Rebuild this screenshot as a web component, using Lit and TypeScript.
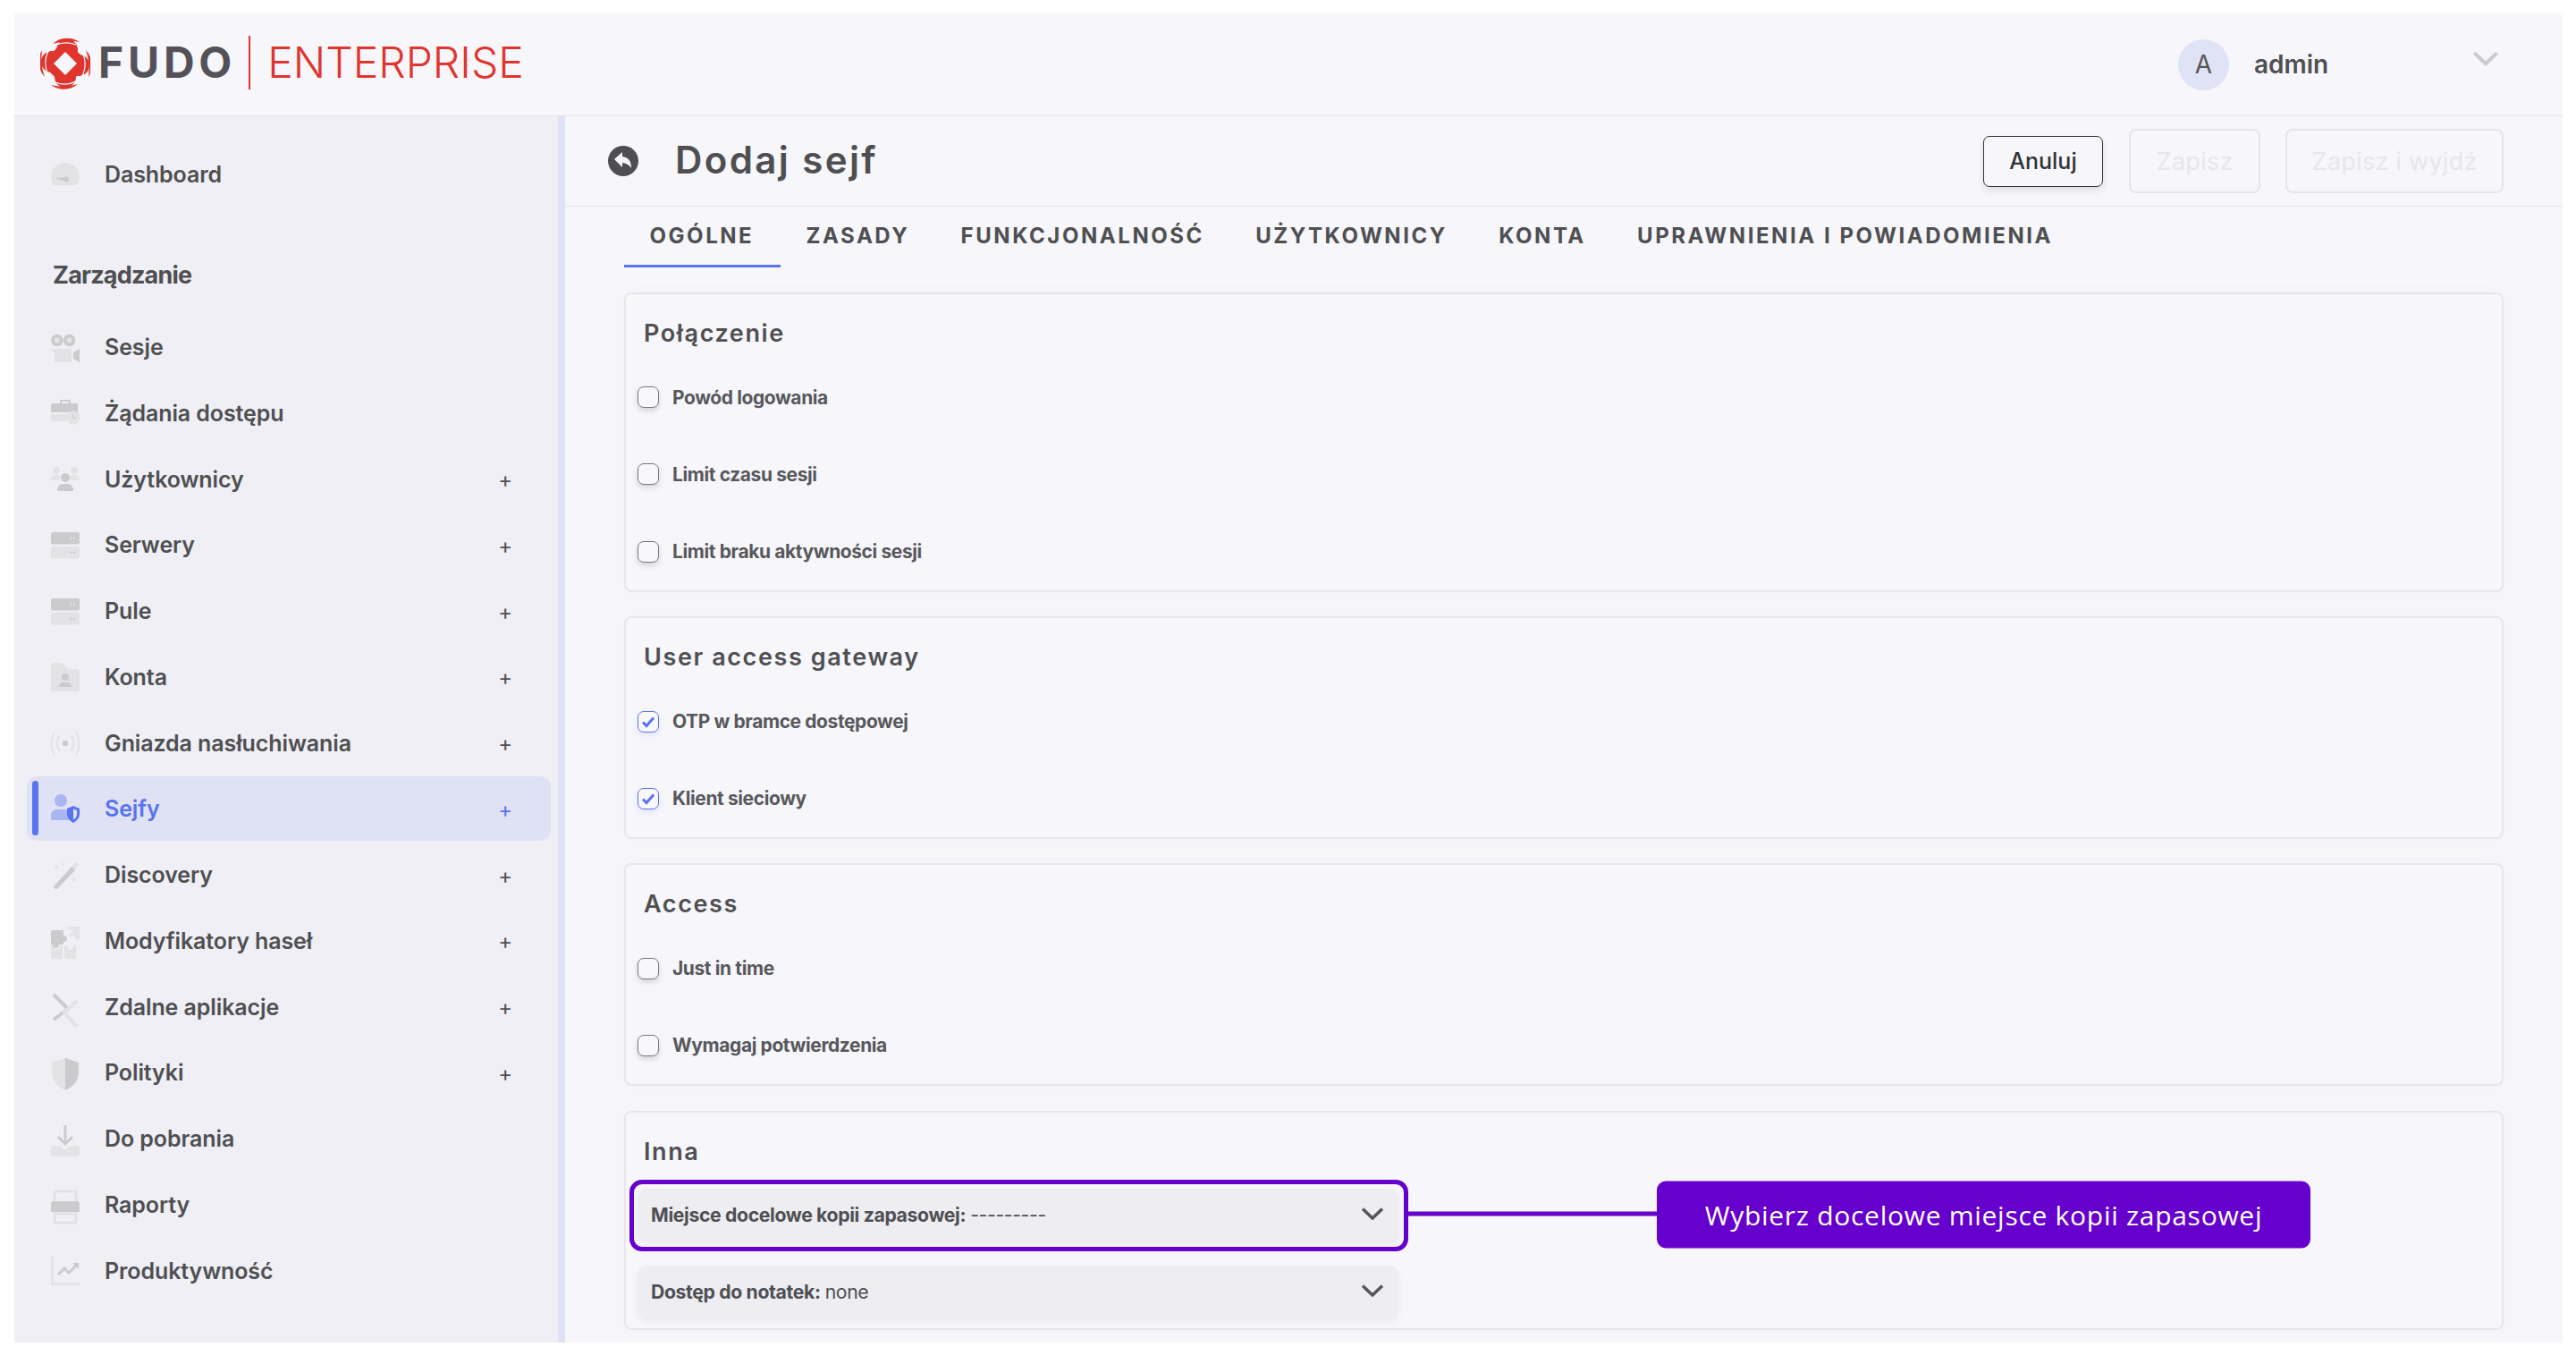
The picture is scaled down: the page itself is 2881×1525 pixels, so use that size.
import { LitElement, html, css, svg } from "lit";
import { customElement } from "lit/decorators.js";

const D = "#cbcbcf";
const L = "#e2e2e7";
const icons: Record<string, unknown> = {
  dash: svg`<path d="M2.8 28A16 16 0 1 1 29.2 28Z" fill="${L}"/><path d="M4 20L15 19.5V23Z" fill="${D}"/><circle cx="17" cy="21.5" r="3" fill="${D}"/>`,
  cam: svg`<circle cx="6.8" cy="8.5" r="6.8" fill="${D}"/><circle cx="20.5" cy="8.5" r="6.8" fill="${D}"/><circle cx="6.8" cy="8.5" r="3" fill="${L}"/><circle cx="20.5" cy="8.5" r="3" fill="${L}"/><path d="M0 18H23V33H4V21H1Z" fill="${L}"/><path d="M32 18V33L25 29V22Z" fill="${D}"/>`,
  case: svg`<path d="M11 5V2H21V5" fill="none" stroke="${D}" stroke-width="2"/><path d="M2 5H30V15H0V7Q0 5 2 5Z" fill="${D}"/><path d="M0 17H18V25H2Q0 25 0 23Z" fill="${L}"/><circle cx="25" cy="21" r="7.5" fill="${L}"/><path d="M25 17V21.5H28" fill="none" stroke="${D}" stroke-width="1.3"/>`,
  users: svg`<circle cx="6" cy="6" r="4" fill="${L}"/><circle cx="26" cy="6" r="4" fill="${L}"/><path d="M0 17Q0 11 6 11H10V17Z M32 17Q32 11 26 11H22V17Z" fill="${L}"/><circle cx="16" cy="14" r="5" fill="${D}"/><path d="M7 29Q7 21 14 21H18Q25 21 25 29Z" fill="${D}"/>`,
  server: svg`<rect y="2" width="32" height="13.5" rx="2" fill="${D}"/><rect y="18" width="32" height="13.5" rx="2" fill="${L}"/><circle cx="22" cy="8.7" r="1.2" fill="${L}"/><circle cx="26" cy="8.7" r="1.2" fill="${L}"/><circle cx="22" cy="24.7" r="1.2" fill="${D}"/><circle cx="26" cy="24.7" r="1.2" fill="${D}"/>`,
  folder: svg`<path d="M2 0H12L19 7H30Q32 7 32 9V30Q32 32 30 32H2Q0 32 0 30V2Q0 0 2 0Z" fill="${L}"/><circle cx="16" cy="16" r="4" fill="${D}"/><path d="M9 27Q9 22 14 22H18Q23 22 23 27Z" fill="${D}"/>`,
  wave: svg`<circle cx="16" cy="16" r="3.2" fill="${D}"/><g fill="none" stroke="${L}" stroke-width="2"><path d="M9.5 7Q4 16 9.5 25"/><path d="M22.5 7Q28 16 22.5 25"/><path d="M4 3Q-3 16 4 29"/><path d="M28 3Q35 16 28 29"/></g>`,
  sejf: svg`<circle cx="11" cy="7" r="7" fill="#a9b6ef"/><path d="M0 29V24Q0 17 7 17H15Q18 17 20 18V29Z" fill="#a9b6ef"/><path d="M25 13L32 16V22Q32 28 25 32Q18 28 18 22V16Z" fill="#5a73ee"/><path d="M25 16.5L29 18V22Q29 26 25 28.5Z" fill="#dfe2f5"/>`,
  wand: svg`<path d="M3 29L23 7L27 11L7 32Q3 32 3 29Z" fill="${D}"/><path d="M23 7L26 3.5Q28 1 30 3T29 7L27 11Z" fill="${L}"/><path d="M6 3L7 6L10 7L7 8L6 11L5 8L2 7L5 6ZM14 1L14.7 3.3L17 4L14.7 4.7L14 7L13.3 4.7L11 4L13.3 3.3ZM26 18L27 21L30 22L27 23L26 26L25 23L22 22L25 21Z" fill="${L}"/>`,
  puzzle: svg`<path d="M0 6Q0 4 2 4H14V10Q18 10 18 14Q18 17 14 17V20H9Q9 24 5 24Q2 24 2 20H0Z" fill="${D}"/><path d="M0 21H2Q3 26 7 25Q10 24 10 21H13V36H2Q0 36 0 34Z" fill="${L}"/><path d="M15 21H18Q18 26 21 26Q25 26 25 21H28V34Q28 36 26 36H15Z" fill="${L}"/><path d="M18 0H30Q32 0 32 2V14H28Q28 10 24 10Q20 10 20 14V9Q24 8 24 5Q24 3 18 3Z" fill="${L}"/>`,
  apps: svg`<path d="M3 2L19 18L3 30" fill="none" stroke="${D}" stroke-width="4"/><path d="M29 9L15 22L29 38" fill="none" stroke="${L}" stroke-width="4"/>`,
  shield: svg`<path d="M16 0L1 5V16Q1 29 16 36Z" fill="${L}"/><path d="M16 0L31 5V16Q31 29 16 36Z" fill="${D}"/>`,
  down: svg`<path d="M16 1V22M8 14L16 22L24 14" fill="none" stroke="${D}" stroke-width="3"/><path d="M2 24H10L16 29L22 24H30Q32 24 32 26V32Q32 36 28 36H4Q0 36 0 32V26Q0 24 2 24Z" fill="${L}"/>`,
  print: svg`<path d="M4 13V1H28V13" fill="none" stroke="${L}" stroke-width="3"/><path d="M3 12H29Q32 12 32 15V24H0V15Q0 12 3 12Z" fill="${D}"/><path d="M4 26H28V36H4Z" fill="none" stroke="${L}" stroke-width="3"/>`,
  chart: svg`<path d="M1.5 0V30.5H32" fill="none" stroke="${L}" stroke-width="3"/><path d="M8 20L15 13L20 18L29 9" fill="none" stroke="${D}" stroke-width="3"/><path d="M24 7H31V14Z" fill="${D}"/>`,
};

const ic = (n: string) => html`<svg class="ic" viewBox="0 0 32 32">${icons[n]}</svg>`;
const chev = (cls: string) =>
  html`<svg class="${cls}" viewBox="0 0 26 14"><path d="M2 1.5L13 12L24 1.5" fill="none" stroke="currentColor" stroke-width="3.5"/></svg>`;

const menu: [string, string, boolean, boolean?][] = [
  ["Sesje", "cam", false],
  ["Żądania dostępu", "case", false],
  ["Użytkownicy", "users", true],
  ["Serwery", "server", true],
  ["Pule", "server", true],
  ["Konta", "folder", true],
  ["Gniazda nasłuchiwania", "wave", true],
  ["Sejfy", "sejf", true, true],
  ["Discovery", "wand", true],
  ["Modyfikatory haseł", "puzzle", true],
  ["Zdalne aplikacje", "apps", true],
  ["Polityki", "shield", true],
  ["Do pobrania", "down", false],
  ["Raporty", "print", false],
  ["Produktywność", "chart", false],
];

const tabs = ["OGÓLNE", "ZASADY", "FUNKCJONALNOŚĆ", "UŻYTKOWNICY", "KONTA", "UPRAWNIENIA I POWIADOMIENIA"];

const sections: [string, [string, boolean][]][] = [
  ["Połączenie", [["Powód logowania", false], ["Limit czasu sesji", false], ["Limit braku aktywności sesji", false]]],
  ["User access gateway", [["OTP w bramce dostępowej", true], ["Klient sieciowy", true]]],
  ["Access", [["Just in time", false], ["Wymagaj potwierdzenia", false]]],
];

@customElement("app-root")
export class AppRoot extends LitElement {
  static styles = css`
    :host { display: block; height: 1525px; background: #fff; padding: 15px 15px 24px 16px; box-sizing: border-box; font-family: Inter, "Liberation Sans", sans-serif; color: #4f4f52; overflow: hidden; }
    .frame { height: 1486px; background: #f6f6fb; display: flex; flex-direction: column; overflow: hidden; }
    header { height: 114px; flex: none; border-bottom: 1px solid #e3e3e9; display: flex; align-items: center; padding-left: 29px; padding-right: 71px; }
    .mark { width: 56px; height: 58px; flex: none; margin-top: -2px; }
    .fudo { font-size: 48px; font-weight: 700; letter-spacing: 4.8px; color: #545158; margin-left: 9px; line-height: 1; margin-top: -4px; }
    .sep { width: 2px; height: 60px; background: #e0352e; margin: -4px 19px 0 14px; flex: none; }
    .ent { font-size: 48px; font-weight: 300; color: #e0352e; line-height: 1; letter-spacing: 0; margin-top: -4px; }
    .user { margin-left: auto; display: flex; align-items: center; }
    .avatar { width: 57px; height: 57px; border-radius: 50%; background: #e0e3f5; display: flex; align-items: center; justify-content: center; font-size: 28px; color: #555; }
    .uname { font-size: 28px; font-weight: 600; margin-left: 28px; width: 244px; }
    .uchev { width: 30px; height: 17px; color: #cbcbcf; margin-top: -14px; }
    .body { flex: 1; display: flex; min-height: 0; }
    aside { width: 608px; flex: none; background: #efeff5; border-right: 8px solid #dfe2f5; padding-top: 29px; }
    .item { height: 72px; margin: 0 8px 1.75px 14px; padding: 0 43px 0 27px; display: flex; align-items: center; font-size: 25px; font-weight: 600; letter-spacing: -0.1px; border-radius: 12px; position: relative; }
    .item .ic { width: 32px; height: 32px; overflow: visible; flex: none; margin-right: 28px; }
    .item .plus { margin-left: auto; font-size: 24px; font-weight: 400; margin-top: 2px; }
    .item.on { background: #dfe2f5; color: #5a73ee; }
    .bar { position: absolute; left: 6px; top: 5px; bottom: 6px; width: 7px; border-radius: 4px; background: #5a73ee; }
    .sec { font-size: 27px; font-weight: 700; letter-spacing: -0.8px; height: 40px; line-height: 40px; margin: 57px 0 24px 43px; }
    .dashitem { margin-bottom: 0; }
    main { flex: 1; min-width: 0; display: flex; flex-direction: column; }
    .tbar { height: 101px; flex: none; border-bottom: 1px solid #e3e3e9; display: flex; align-items: center; padding: 0 66px 0 48px; box-sizing: border-box; }
    .back { width: 34px; height: 34px; flex: none; }
    h1 { margin: -3px 0 0 41px; font-size: 42px; font-weight: 600; letter-spacing: 2.4px; flex: 1; line-height: 1; }
    .btn { box-sizing: border-box; display: flex; align-items: center; justify-content: center; border-radius: 8px; font-size: 27.6px; }
    .cancel { width: 134px; height: 57px; border: 1.5px solid #333; color: #333; font-size: 25px; font-weight: 500; margin-right: 29px; box-shadow: 0 4px 8px rgba(0,0,0,.1); border-radius: 7px; }
    .off { height: 72px; border: 2px solid #e4e4ea; color: #e7e7eb; }
    .off.a { width: 147px; margin-right: 28px; }
    .off.b { width: 244px; }
    .tabs { height: 68px; flex: none; display: flex; margin-left: 66px; box-sizing: border-box; }
    .tab { padding: 0 28.65px; font-size: 24px; font-weight: 700; letter-spacing: 2.55px; display: flex; align-items: center; height: 68px; box-sizing: border-box; padding-bottom: 4px; }
    .tab.on { border-bottom: 3px solid #5a73ee; padding: 0 29.5px 1px 28.5px; }
    .cards { margin: 28px 66px 0 66px; display: flex; flex-direction: column; gap: 27.5px; }
    .card { border: 2px solid #e6e6ec; border-radius: 8px; padding: 24px 13px 0; box-sizing: border-box; box-shadow: 0 0 20px rgba(90,90,130,.03); }
    h2 { margin: 0 0 8px 7px; font-size: 27px; font-weight: 600; letter-spacing: 1.6px; line-height: 40px; height: 40px; }
    .row { height: 86.3px; display: flex; align-items: center; font-size: 20.9px; font-weight: 700; letter-spacing: -0.35px; color: #58585c; }
    .cb { width: 24px; height: 24px; border: 1.5px solid #77777c; border-radius: 7px; box-sizing: border-box; margin-right: 15px; flex: none; box-shadow: 0 3px 6px rgba(0,0,0,.14); display: flex; align-items: center; justify-content: center; background: #f8f8fc; }
    .cb.on { border-color: #5a73ee; box-shadow: 0 3px 6px rgba(90,115,238,.12); }
    .cb svg { width: 16px; height: 14px; }
    .last { padding-bottom: 12px; }
    .last h2 { margin-bottom: 21px; }
    .sel { position: relative; height: 58px; width: 851px; background: #ededf2; border-radius: 10px; box-shadow: 0 4px 8px rgba(0,0,0,.06); display: flex; align-items: center; padding: 0 14px 0 15px; box-sizing: border-box; font-size: 21.2px; letter-spacing: -0.35px; font-weight: 400; }
    .sel + .sel { margin-top: 28px; }
    .sel b { font-weight: 700; margin-right: 5px; }
    .schev { margin-left: auto; width: 26px; height: 14px; color: #55555a; margin-right: 2px; margin-top: -1px; }
    .ring { position: absolute; left: -9px; right: -11px; top: -10px; bottom: -12px; border: 5px solid #6600cc; border-radius: 14px; pointer-events: none; }
    .callout { position: absolute; left: 862px; top: 50%; transform: translateY(-50%); display: flex; align-items: center; }
    .line { width: 278px; height: 5px; background: #6600cc; flex: none; margin-top: -2px; }
    .label { width: 731px; height: 75px; box-sizing: border-box; background: #6600cc; border-radius: 10px; color: #fff; font-family: "Open Sans", sans-serif; font-size: 30px; letter-spacing: 0.72px; display: flex; align-items: center; justify-content: center; white-space: nowrap; }
  `;

  render() {
    return html`<div class="frame">
      <header>
        <svg class="mark" viewBox="0 0 56 58">
          <g fill="#e0352e">
            <rect x="9" y="10" width="38" height="38" rx="9" transform="rotate(45 28 29)"/>
            <circle cx="30" cy="14" r="12"/><circle cx="28" cy="44" r="12"/><circle cx="13" cy="27" r="12"/><circle cx="43" cy="31" r="12"/>
            <path d="M14 7A24 24 0 0 1 44 5Q30 2 14 7ZM51 14A25 25 0 0 1 54 44Q56 28 51 14ZM42 52A24 24 0 0 1 12 53Q26 57 42 52ZM5 44A25 25 0 0 1 2 14Q0 30 5 44Z"/>
          </g>
          <path d="M28 16L41 29L28 42L15 29Z" fill="#f6f6fb"/>
          <g fill="none" stroke="#f6f6fb" stroke-width="1.2"><path d="M7 17Q20 1 40 8"/><path d="M46 14Q56 34 42 50"/><path d="M49 41Q36 57 16 50"/><path d="M10 44Q0 24 14 8"/></g>
        </svg>
        <span class="fudo">FUDO</span><span class="sep"></span><span class="ent">ENTERPRISE</span>
        <div class="user"><span class="avatar">A</span><span class="uname">admin</span>${chev("uchev")}</div>
      </header>
      <div class="body">
        <aside>
          <div class="item dashitem">${ic("dash")}Dashboard</div>
          <div class="sec">Zarządzanie</div>
          ${menu.map(([t, i, plus, on]) => html`<div class="item ${on ? "on" : ""}">${on ? html`<span class="bar"></span>` : ""}${ic(i)}${t}${plus ? html`<span class="plus">+</span>` : ""}</div>`)}
        </aside>
        <main>
          <div class="tbar">
            <svg class="back" viewBox="0 0 34 34"><circle cx="17" cy="17" r="17" fill="#4f4f52"/><path d="M7 15L16 7V12Q26 13 26 25Q23 20 16 19V24Z" fill="#f6f6fb"/></svg>
            <h1>Dodaj sejf</h1>
            <div class="btn cancel">Anuluj</div>
            <div class="btn off a">Zapisz</div>
            <div class="btn off b">Zapisz i wyjdź</div>
          </div>
          <div class="tabs">${tabs.map((t, i) => html`<div class="tab ${i === 0 ? "on" : ""}">${t}</div>`)}</div>
          <div class="cards">
            ${sections.map(([h, rows]) => html`<section class="card"><h2>${h}</h2>${rows.map(([l, c]) => html`<div class="row"><span class="cb ${c ? "on" : ""}">${c ? html`<svg viewBox="0 0 16 14"><path d="M2 7.5L6 11.5L14 2.5" fill="none" stroke="#5a73ee" stroke-width="3"/></svg>` : ""}</span>${l}</div>`)}</section>`)}
            <section class="card last">
              <h2>Inna</h2>
              <div class="sel"><b>Miejsce docelowe kopii zapasowej:</b> ---------${chev("schev")}
                <span class="ring"></span>
                <div class="callout"><span class="line"></span><span class="label">Wybierz docelowe miejsce kopii zapasowej</span></div>
              </div>
              <div class="sel"><b>Dostęp do notatek:</b> none${chev("schev")}</div>
            </section>
          </div>
        </main>
      </div>
    </div>`;
  }
}
